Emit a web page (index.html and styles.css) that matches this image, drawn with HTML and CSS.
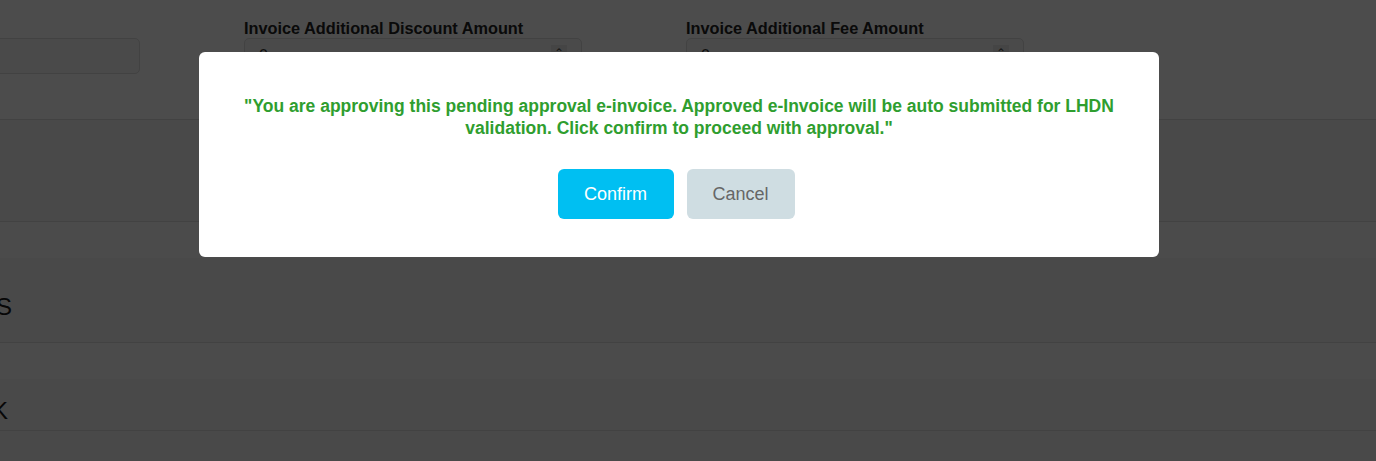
FILE: index.html
```html
<!DOCTYPE html>
<html lang="en">
<head>
    <meta charset="UTF-8">
    <meta name="viewport" content="width=device-width, initial-scale=1.0">
    <title>e-Invoice Approval</title>
    <link rel="stylesheet" href="styles.css">
</head>
<body>

    <div class="page">
        <!-- Amount fields -->
        <div class="form-card">
            <div class="form-row">
                <div class="field">
                    <label>Invoice Currency</label>
                    <div class="num-input"><input type="text" value=""></div>
                </div>
                <div class="field">
                    <label>Invoice Additional Discount Amount</label>
                    <div class="num-input"><input type="text" value="0"><span class="spin">&#8963;</span></div>
                </div>
                <div class="field">
                    <label>Invoice Additional Fee Amount</label>
                    <div class="num-input"><input type="text" value="0"><span class="spin">&#8963;</span></div>
                </div>
            </div>
        </div>

        <div class="block"></div>
        <div class="band"></div>

        <div class="section-head">
            <h2 class="section-title">LINE ITEMS</h2>
        </div>

        <div class="band"></div>

        <div class="section-head short">
            <h2 class="section-title narrow">FEEDBACK</h2>
        </div>

        <div class="rest"></div>
    </div>

    <!-- Approval confirm dialog -->
    <div class="overlay">
        <div class="modal">
            <p class="modal-msg">"You are approving this pending approval e-invoice. Approved e-Invoice will be auto submitted for LHDN validation. Click confirm to proceed with approval."</p>
            <div class="modal-actions">
                <button class="btn-confirm">Confirm</button>
                <button class="btn-cancel">Cancel</button>
            </div>
        </div>
    </div>

</body>
</html>
```

FILE: styles.css
```css
/* General Reset */
* {
    margin: 0;
    padding: 0;
    box-sizing: border-box;
    font-family: "Liberation Sans", Arial, sans-serif;
}

body {
    background-color: #f5f5f5;
    color: #333333;
    overflow: hidden;
}

/* Page scrolled sideways, first column is cut off */
.page {
    margin-left: -198px;
}

.form-card {
    background-color: #ffffff;
    padding-top: 19px;
    height: 120px;
    border-bottom: 1px solid #dddddd;
}

.form-row {
    display: flex;
    gap: 104px;
}

.field {
    width: 338px;
}

.field label {
    display: block;
    font-size: 16.3px;
    font-weight: bold;
    line-height: 18px;
    margin-bottom: 1px;
    color: #222222;
    white-space: nowrap;
}

.num-input {
    display: flex;
    align-items: center;
    height: 36px;
    border: 1px solid #dcdcdc;
    border-radius: 5px;
    background-color: #f7f7f7;
    padding: 0 14px;
}

.num-input input {
    flex: 1;
    min-width: 0;
    border: none;
    background: transparent;
    font-size: 16px;
    color: #333333;
    outline: none;
}

.spin {
    width: 16px;
    height: 22px;
    background-color: #e8e8e8;
    color: #555555;
    font-size: 12px;
    text-align: center;
    line-height: 16px;
}

.block {
    height: 102px;
    border-bottom: 1px solid #dddddd;
}

.band {
    height: 36px;
    background-color: #fafafa;
}

.section-head {
    height: 85px;
    padding-top: 35px;
    border-bottom: 1px solid #dddddd;
}

.section-head.short {
    height: 52px;
    padding-top: 18px;
}

/* Right aligned so the title runs off the left edge */
.section-title {
    display: flex;
    justify-content: flex-end;
    width: 210px;
    white-space: nowrap;
    font-size: 24px;
    font-weight: normal;
    line-height: 28px;
    color: #1a1a1a;
}

.section-title.narrow {
    width: 206px;
}

.rest {
    height: 100px;
}

/* Dialog */
.overlay {
    position: fixed;
    top: 0;
    left: 0;
    right: 0;
    bottom: 0;
    background-color: rgba(0, 0, 0, 0.7);
    display: flex;
    justify-content: center;
    align-items: flex-start;
    padding: 52px 18px 0 0;
}

.modal {
    width: 960px;
    background-color: #ffffff;
    border-radius: 6px;
    padding: 43px 40px 38px;
    text-align: center;
}

.modal-msg {
    font-size: 17.5px;
    font-weight: bold;
    line-height: 22px;
    color: #2f9e2f;
}

.modal-actions {
    display: flex;
    justify-content: center;
    gap: 13px;
    margin-top: 30px;
    padding-right: 6px;
}

.modal-actions button {
    height: 50px;
    border: none;
    border-radius: 6px;
    font-size: 18px;
    cursor: pointer;
}

.btn-confirm {
    width: 116px;
    background-color: #00bff2;
    color: #ffffff;
}

.btn-cancel {
    width: 108px;
    background-color: #cfdde2;
    color: #666666;
}
```
